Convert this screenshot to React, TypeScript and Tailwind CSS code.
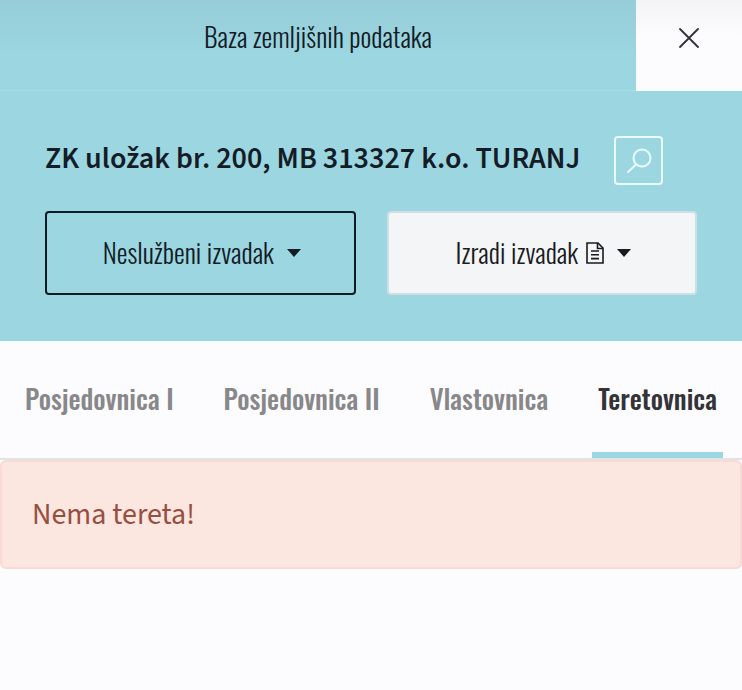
import { useState } from 'react';

const tabs = ['Posjedovnica I', 'Posjedovnica II', 'Vlastovnica', 'Teretovnica'];

function Caret() {
  return (
    <svg viewBox="0 0 16 8" className="h-2 w-4" fill="currentColor" aria-hidden="true">
      <path d="M1 0h14L8 8z" />
    </svg>
  );
}

function FileIcon() {
  return (
    <svg viewBox="0 0 18 22" className="h-[22px] w-[18px]" fill="none" stroke="currentColor" strokeWidth="1.6" aria-hidden="true">
      <path d="M1 1h11l5 5v15H1z" />
      <path d="M11.500 1v5.500H17" />
      <path d="M5 9h8M5 12.800h8M5 16.600h8" />
    </svg>
  );
}

export default function App() {
  const [active, setActive] = useState('Teretovnica');

  return (
    <div className="min-h-screen bg-[#fcfcfe] font-['Oswald','Liberation_Sans_Narrow',sans-serif] text-[#141c26]">
      {/* Title bar */}
      <header className="flex h-[91px] bg-[#9bd6e1]">
        <div className="flex flex-1 justify-center border-b border-[#a6dce6] bg-linear-to-b from-[#96cdd8] to-[#9bd6e1] to-60% pt-5">
          <h1 className="text-[27px] leading-8 font-light">Baza zemljišnih podataka</h1>
        </div>
        <button
          type="button"
          aria-label="Zatvori"
          className="flex w-[106px] items-start justify-center bg-linear-to-b from-[#f4f4f6] to-[#fcfcfe] to-40% pt-7 text-[#303036]"
        >
          <svg viewBox="0 0 20 20" className="size-5" fill="none" stroke="currentColor" strokeWidth="1.8" strokeLinecap="round">
            <path d="M1 1l18 18M19 1L1 19" />
          </svg>
        </button>
      </header>

      {/* Land registry entry */}
      <section className="bg-[#9bd6e1] px-[45px] pt-[45px] pb-[46px]">
        <div className="flex items-start gap-[34px]">
          <h2 className="font-['Source_Sans_3','Noto_Sans',sans-serif] text-[30px] leading-[45px] font-semibold">
            ZK uložak br. 200, MB 313327 k.o. TURANJ
          </h2>
          <button
            type="button"
            aria-label="Pretraži"
            className="flex size-[49px] shrink-0 items-center justify-center rounded border-2 border-[#e9fbff] text-[#e9fbff]"
          >
            <svg viewBox="0 0 26 26" className="size-[26px]" fill="none" stroke="currentColor" strokeWidth="2" strokeLinecap="round">
              <circle cx="16" cy="10" r="8.500" />
              <path d="M10 16.500L2 24" />
            </svg>
          </button>
        </div>

        <div className="mt-[26px] grid grid-cols-2 gap-[31px] text-[27px]">
          <button
            type="button"
            className="flex h-[84px] items-center justify-center gap-3 rounded border-2 border-[#111b22] pb-px pl-1 font-light"
          >
            Neslužbeni izvadak
            <Caret />
          </button>
          <button
            type="button"
            className="flex h-[84px] items-center justify-center gap-3 rounded border-2 border-[#ccdfe3] bg-[#f4f5f7] pb-px pl-1 font-light text-[#1b1b1f]"
          >
            <span className="flex items-center gap-2">
              Izradi izvadak
              <FileIcon />
            </span>
            <Caret />
          </button>
        </div>
      </section>

      <nav className="flex justify-between border-b-2 border-[#e2e3e5] px-[19px]" role="tablist">
        {tabs.map((tab) => (
          <button
            key={tab}
            type="button"
            role="tab"
            aria-selected={tab === active}
            onClick={() => setActive(tab)}
            className={`h-[117px] border-y-[6px] border-t-transparent px-[6px] pb-[2px] text-[27px] font-medium ${
              tab === active ? 'border-b-[#9bd6e1] text-[#343438]' : 'border-b-transparent text-[#88888a]'
            }`}
          >
            {tab}
          </button>
        ))}
      </nav>

      <div
        role="alert"
        className="rounded-md border-2 border-[#fadad5] bg-[#fce6e0] px-[30px] py-[30px] font-['Source_Sans_3','Noto_Sans',sans-serif] text-[30px] leading-[45px] text-[#974f42]"
      >
        Nema tereta!
      </div>
    </div>
  );
}
